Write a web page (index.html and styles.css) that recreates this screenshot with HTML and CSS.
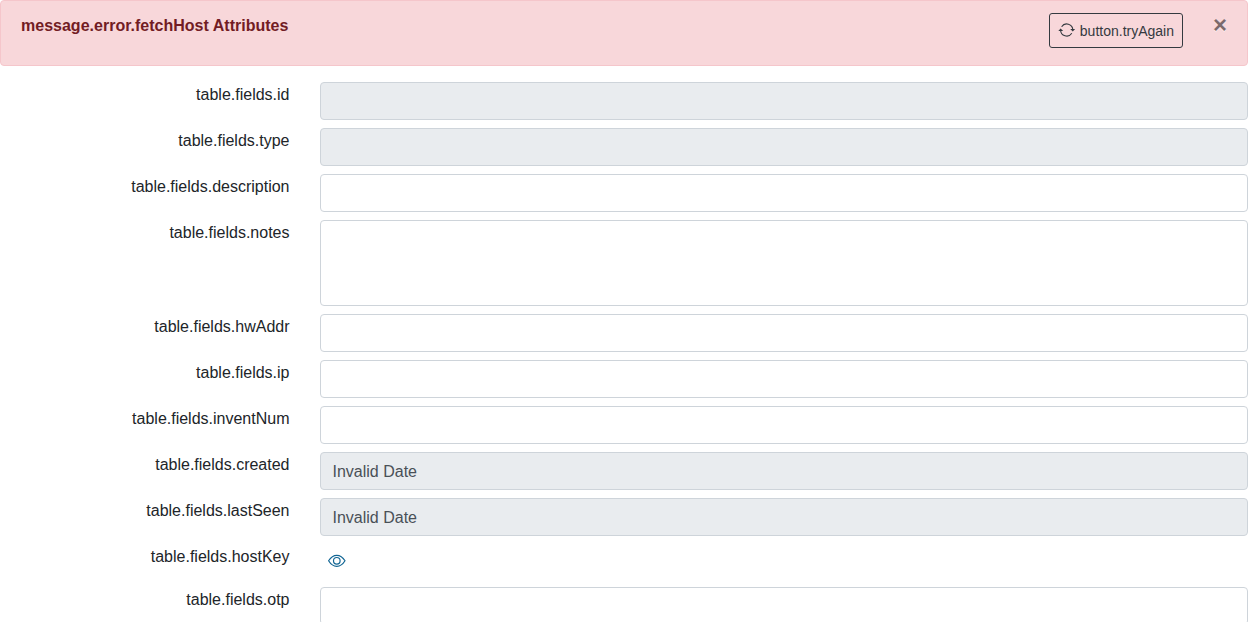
FILE: index.html
```
<!DOCTYPE html>
<html lang="en">
<head>
<meta charset="utf-8">
<title>Host Attributes</title>
<link rel="stylesheet" href="styles.css">
</head>
<body>
<div class="alert" role="alert">
  <strong class="alert-title">message.error.fetchHost Attributes</strong>
  <button class="btn-retry" type="button">
    <svg class="retry-icon" viewBox="0 0 18 18" aria-hidden="true">
      <path class="arc" d="M3.6 5.7A6.1 6.1 0 0 1 14.8 9M13.8 12.3A6.1 6.1 0 0 1 2.6 9"/>
      <path class="tip" d="M.3 9.9 2.6 7.5 5.2 9.9zM12.2 8.1 14.8 10.5 17.1 8.1z"/>
    </svg>
    <span class="retry-text">button.tryAgain</span>
  </button>
  <button class="close" type="button" aria-label="Close">×</button>
</div>
<form class="fields">
  <label class="label" for="id">table.fields.id</label><input class="control" id="id" readonly>
  <label class="label" for="type">table.fields.type</label><input class="control" id="type" readonly>
  <label class="label" for="desc">table.fields.description</label><input class="control" id="desc">
  <label class="label" for="notes">table.fields.notes</label><textarea class="control notes" id="notes"></textarea>
  <label class="label" for="hw">table.fields.hwAddr</label><input class="control" id="hw">
  <label class="label" for="ip">table.fields.ip</label><input class="control" id="ip">
  <label class="label" for="num">table.fields.inventNum</label><input class="control" id="num">
  <label class="label" for="created">table.fields.created</label><input class="control" id="created" value="Invalid Date" readonly>
  <label class="label" for="seen">table.fields.lastSeen</label><input class="control" id="seen" value="Invalid Date" readonly>
  <span class="label">table.fields.hostKey</span>
  <button class="btn-eye" type="button" aria-label="Show">
    <svg class="eye-icon" viewBox="0 0 18 18" aria-hidden="true">
      <path d="M.6 8.8C2.8 5.3 5.6 3.4 8.8 3.4S14.8 5.3 17 8.8C14.8 12.4 12 14.3 8.8 14.3S2.8 12.4 .6 8.8z"/>
      <circle cx="8.8" cy="8.8" r="3.3"/>
    </svg>
  </button>
  <label class="label" for="otp">table.fields.otp</label><input class="control" id="otp">
</form>
</body>
</html>
```
FILE: styles.css
```
* { box-sizing: border-box; }
body {
  margin: 0;
  height: 622px;
  overflow: hidden;
  background: #fff;
  color: #212529;
  font: 16px/24px "Liberation Sans", Arial, sans-serif;
}
button, input, textarea { font: inherit; }
.alert {
  position: relative;
  display: flex;
  justify-content: space-between;
  align-items: flex-start;
  height: 66px;
  margin-bottom: 16px;
  padding: 12px 64px 12px 20px;
  border: 1px solid #f5c6cb;
  border-radius: 4px;
  background: #f8d7da;
  color: #721c24;
}
.alert-title { padding-top: 1px; letter-spacing: .01px; }
.btn-retry {
  display: flex;
  align-items: center;
  gap: 4px;
  height: 35px;
  padding: 0 8px;
  border: 1px solid #343a40;
  border-radius: 3px;
  background: transparent;
  color: #343a40;
  font-size: 14px;
  line-height: 21px;
}
.retry-text { padding-top: 2px; }
.retry-icon { width: 18px; height: 18px; margin-top: -2px; }
.arc { fill: none; stroke: #343a40; stroke-width: 1.1; }
.tip { fill: #343a40; }
.close {
  position: absolute;
  top: 0;
  right: 0;
  padding: 12px 20px;
  border: 0;
  background: transparent;
  color: #000;
  font-size: 24px;
  font-weight: 700;
  line-height: 24px;
  text-shadow: 0 1px 0 #fff;
  opacity: .5;
}
.fields {
  display: grid;
  grid-template-columns: 289.5px 1fr;
  column-gap: 30px;
  row-gap: 8px;
}
.label { padding-top: 1px; text-align: right; }
.control {
  display: block;
  width: 100%;
  height: 38px;
  margin: 0;
  padding: 7px 12px 5px;
  border: 1px solid #ced4da;
  border-radius: 4px;
  background: #fff;
  color: #495057;
  outline: 0;
}
.control:read-only { background: #e9ecef; }
.notes { height: 86px; resize: none; }
.btn-eye {
  display: flex;
  align-items: center;
  justify-self: start;
  height: 35px;
  padding: 0 8px;
  border: 0;
  background: transparent;
}
.eye-icon {
  width: 18px;
  height: 18px;
  margin-top: -1px;
  fill: none;
  stroke: #126694;
  stroke-width: 1.2;
}
```
